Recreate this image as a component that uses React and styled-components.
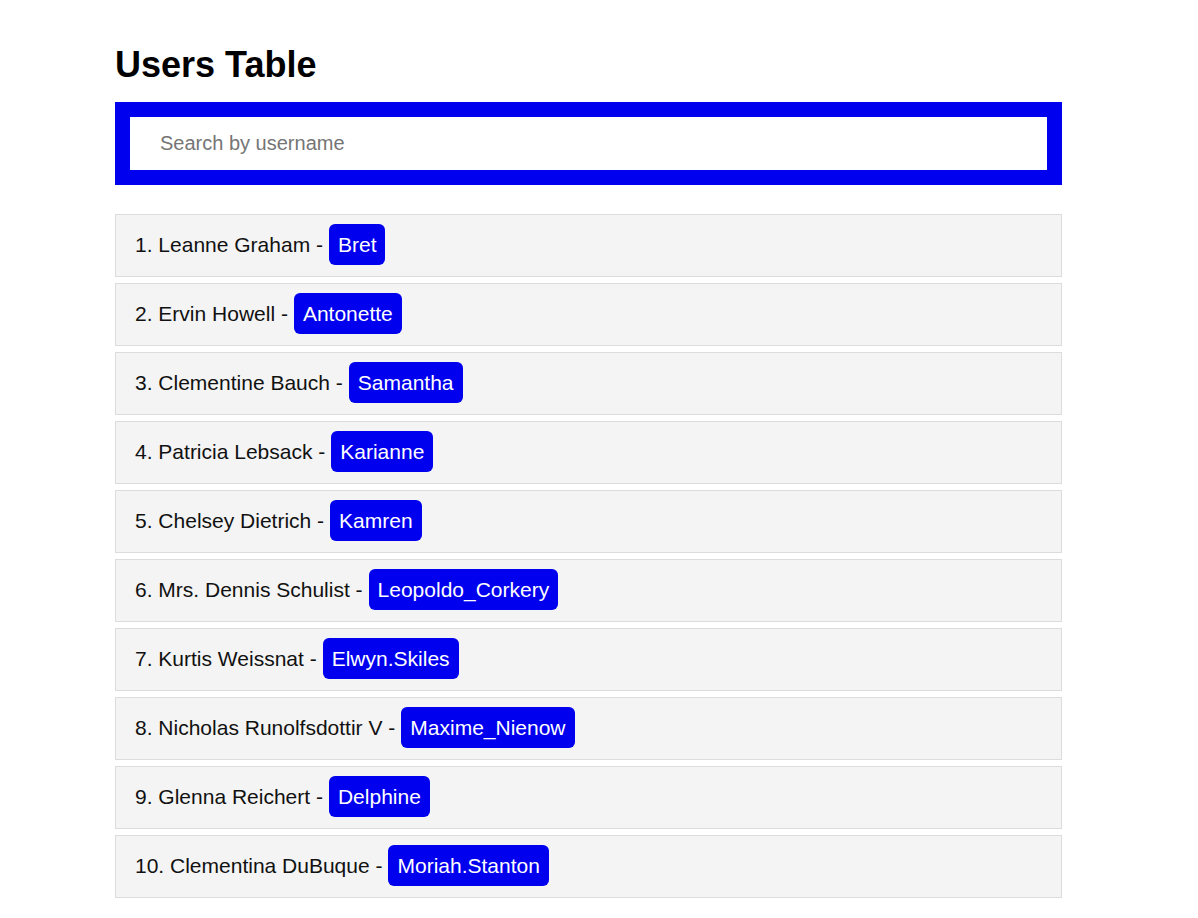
import styled, { createGlobalStyle } from "styled-components";

const Global = createGlobalStyle`
body{margin:0;background:#fff;font-family:"Liberation Sans",Arial,sans-serif;}
`;

const Pagina = styled.main`
padding:0 136px 20px 115px;`;

const Titulo = styled.h1`
margin:0;padding-top:45px;font-size:36px;line-height:39px;color:#000;font-weight:bold;`;

const CaixaBusca = styled.div`
margin-top:18px;border:15px solid #0000ee;background:#fff;display:flex;`;

const Busca = styled.input`
flex:1;height:53px;border:none;outline:none;padding:0 30px;box-sizing:border-box;
font-family:"Liberation Sans",Arial,sans-serif;font-size:20px;color:#000;
&::placeholder{color:#757575;}
`;

const Lista = styled.ul`
list-style:none;margin:29px 0 0;padding:0;display:flex;flex-direction:column;gap:6px;`;

const Linha = styled.li`
display:flex;align-items:center;gap:6px;padding:9px 19px 11px;background:#f4f4f4;
border:1px solid #dcdcdc;font-size:21px;color:#111;`;

const Etiqueta = styled.span`
background:#0000ee;color:#fff;border-radius:6px;padding:8px 9px;line-height:25px;`;

const usuarios = [
 ["Leanne Graham","Bret"],
 ["Ervin Howell","Antonette"],
 ["Clementine Bauch","Samantha"],
 ["Patricia Lebsack","Karianne"],
 ["Chelsey Dietrich","Kamren"],
 ["Mrs. Dennis Schulist","Leopoldo_Corkery"],
 ["Kurtis Weissnat","Elwyn.Skiles"],
 ["Nicholas Runolfsdottir V","Maxime_Nienow"],
 ["Glenna Reichert","Delphine"],
 ["Clementina DuBuque","Moriah.Stanton"],
];

export default function App(){
 return (
  <Pagina>
   <Global/>
   <Titulo>Users Table</Titulo>
   <CaixaBusca>
    <Busca placeholder="Search by username"/>
   </CaixaBusca>
   <Lista>
    {usuarios.map(([nome,usuario],i)=>(
     <Linha key={usuario}>
      <span>{i+1}. {nome} -</span>
      <Etiqueta>{usuario}</Etiqueta>
     </Linha>
    ))}
   </Lista>
  </Pagina>
 );
}
